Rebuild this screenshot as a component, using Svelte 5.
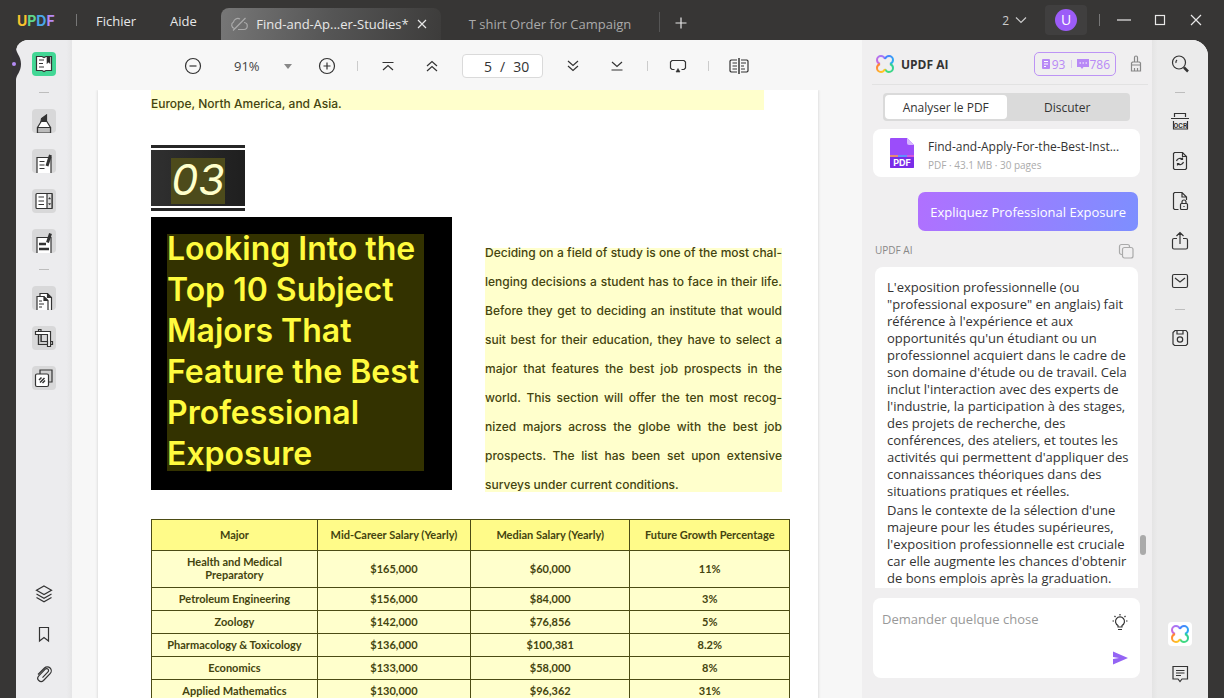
<script>
  let zoom = $state('91%');
  let currentPage = $state('5');
  let question = $state('');
  let activeTab = $state('analyse');

  const pageCount = 30;

  const icons = {
    reader: '<path d="M4.500 4.500h5.500l2 1 2-1h5.500v14H14l-2 1-2-1H4.500z" fill="#fff"/><path d="M7 8h5M7 11.500h4M7 15h5"/><path d="M15 4.500v7l1.500-1.500 1.500 1.500v-7z" fill="#2b2b2b" stroke-width=".6"/>',
    highlight: '<path d="M5.500 24v-5.500l4-6.500h5l4 6.500V24" fill="#fff"/><path d="M5.500 24v-5.500h13V24z" fill="#bbb"/><path d="M9 12.500 9.500 9.500l5-3.500v6.500z" fill="#333"/>',
    edit: '<path d="M5 24V8.500h14V24" fill="#fff"/><path d="M7.500 12.500h5M7.500 16h5M7.500 19.500h5"/><path d="m18.500 6-3.500 11" stroke-width="3"/>',
    form: '<rect x="4" y="4.500" width="16" height="15" rx="1" fill="#fff"/><path d="M15 4.500h5v15h-5z" fill="#ddd"/><path d="M6.500 8h5.500M6.500 12h5.500M6.500 15.500h5.500"/><path d="m16.600 10 1-1.500 1 1.500zM16.600 14.500l1 1.500 1-1.500z" fill="#333" stroke-width=".5"/>',
    sign: '<path d="M5 24V8.500h14V24" fill="#fff"/><path d="M7 15h7M7 20h10" stroke-width="2.500"/><path d="m18.500 4.500-3 9" stroke-width="3"/>',
    pages: '<path d="M8 22V7.500h7.500l4 4V24" fill="#fff"/><path d="M5 24V10.500h7l4 4V24" fill="#fff"/><path d="M12 10.500v4h4M15.500 7.500v4h4" fill="#333"/><path d="M7 15h3M7 18h5M7 21h3"/>',
    crop: '<path d="M6.500 3.500v15h14v-3H9v-12z" fill="#ccc"/><path d="M3.500 5.500v3h12v12h3v-15z" fill="#fff"/><path d="M6.500 8.500v10h9v-3H9v-7z" fill="#ccc"/>',
    layersBox: '<path d="M8 4h12v12H8z" fill="#d0d0d0"/><rect x="3.500" y="8" width="13" height="12.500" rx="1.500" fill="#fff"/><path d="m7 14 2.500-2.500M8 16.500l4.500-4.500M10.500 17l2.500-2.500" stroke-width="1.500"/>',
    layers: '<path d="m12 4 7.500 4.200L12 12.500 4.500 8.200z"/><path d="m4.500 12 7.500 4.200 7.500-4.200M4.500 15.500 12 19.800l7.500-4.300"/>',
    bookmark: '<path d="M7.500 5.500h9v13.500L12 15.500 7.500 19z"/>',
    clip: '<path d="m6 12.500 6.500-6.500a3.900 3.900 0 0 1 5.600 5.600l-6.600 6.900a3.300 3.300 0 0 1-4.700-4.700l6.500-6.600a1.900 1.900 0 0 1 2.700 2.700l-5.500 5.700"/>',
    search: '<circle cx="11" cy="10.500" r="6.500"/><path d="M8 11a3 3 0 0 1 1-3" /><path d="m16 15.500 4 4" stroke-width="2.500"/>',
    ocr: '<path d="M6.500 8V4.500h11V8M3 9.500h18M5.500 12v8h14v-8"/>',
    convert: '<path d="M6.500 3.500h8l4 4v12l-1 1h-11l-1-1v-15z"/><path d="M14.500 3.500v4h4M8.500 12a3.700 3.700 0 0 1 6-1.700M15.500 13a3.700 3.700 0 0 1-6 1.700M14.500 8.500v2h-2M9.500 16.500v-2h2"/>',
    protect: '<path d="M10.500 20.500h-4l-1-1v-15l1-1H14l4.500 4.500v3M14 3.500V8h4.500"/><rect x="12.500" y="14.500" width="7" height="6" rx="1"/><path d="M14 14.500V13a2 2 0 0 1 4 0v1.500M16 17v1"/>',
    share: '<path d="M9 9.500H6a1.500 1.500 0 0 0-1.500 1.500v7.500A1.500 1.500 0 0 0 6 20h12a1.500 1.500 0 0 0 1.500-1.500V11A1.500 1.500 0 0 0 18 9.500h-3M12 15V3.500M8.500 7 12 3.500 15.500 7"/>',
    mail: '<rect x="4.500" y="5.500" width="15" height="13" rx="1.500"/><path d="m7 9 5 4 5-4"/>',
    save: '<path d="M5 6.500 7 4.500h11l1.500 2v11.500l-1.500 1.500H6.500L5 18z"/><path d="M9 4.500V8h6V4.500"/><circle cx="12" cy="13.500" r="2.700"/>',
    comment: '<path d="M5 4.500h14.500v12.500H14L12 19.500 10 17H5z"/><path d="M8 8.500h8.500M8 11h8.500M8 13.500h5"/>',
    minus: '<circle cx="12" cy="12" r="7.500"/><path d="M8.500 12h7"/>',
    plus: '<circle cx="12" cy="12" r="7.500"/><path d="M8.500 12h7M12 8.500v7"/>',
    first: '<path d="M6.500 8.500h11M7 16l5-4.500 5 4.500"/>',
    prev: '<path d="m7 12 5-4.500 5 4.500M7 17l5-4.500L17 17"/>',
    next: '<path d="m7 7 5 4.500L17 7M7 12l5 4.500 5-4.500"/>',
    last: '<path d="m7 8 5 4.500L17 8M6.500 16h11"/>',
    present: '<path d="M8.500 15.500H6L4.500 14V8L6 6.500h12L19.500 8v6L18 15.500h-2.500"/><path d="m12 14.500 2 3.500h-4z" fill="#333" stroke-width=".6"/>',
    compare: '<path d="M12 4v16" stroke-width="1.500"/><path d="M10 6H4L3 7v10l1 1h6M14 6h6l1 1v10l-1 1h-6M5.500 9H10M5.500 12H10M5.500 15H10M14 9h5M14 12h3M14 15h4"/>',
    broom: '<path d="M10.500 10V5.500a1.500 1.500 0 0 1 3 0V10M7.500 13v-2l1-1h7l1 1v2zM7.500 13v6h9v-6M10.500 19v-3M13.500 19v-3"/>',
    bulb: '<path d="M10 17v-1.500a4.500 4.500 0 1 1 4 0V17zM10 19.500h4M12 4v1.500M6.500 6l1 1M17.500 6l-1 1M4.500 11H6M18 11h1.500"/>',
    copy: '<rect x="8.500" y="8.500" width="10.500" height="10.500" rx="2"/><path d="M8.500 15.500H7.500a2 2 0 0 1-2-2v-6a2 2 0 0 1 2-2h6a2 2 0 0 1 2 2v1"/>',
    close: '<path d="m7 7 10 10M17 7 7 17"/>',
    closeSmall: '<path d="m8 8 8 8M16 8l-8 8"/>',
    add: '<path d="M12 6.500v11M6.500 12h11"/>',
    chevron: '<path d="m7 9.500 5 5 5-5"/>',
    minimise: '<path d="M5 12h14"/>',
    maximise: '<rect x="7.500" y="7.500" width="9" height="9"/>',
    unsaved: '<path d="M7.500 16.500a3.500 3.500 0 0 1-1-6.500C7 7.500 10 5.500 13 7M17 10.500a3.500 3.500 0 0 1-.500 7H11M6 18.500 18.500 6"/>'
  };

  const leftTools = [
    { icon: 'highlight', label: 'Commenter' },
    { icon: 'edit', label: 'Modifier' },
    { icon: 'form', label: 'Formulaire' },
    { icon: 'sign', label: 'Signer' }
  ];
  const pageTools = [
    { icon: 'pages', label: 'Organiser' },
    { icon: 'crop', label: 'Rogner' },
    { icon: 'layersBox', label: 'Filigrane' }
  ];
  const navTools = [
    { icon: 'layers', label: 'Calques' },
    { icon: 'bookmark', label: 'Signets' },
    { icon: 'clip', label: 'Pièces jointes' }
  ];
  const shareTools = [
    { icon: 'convert', label: 'Convertir' },
    { icon: 'protect', label: 'Protéger' },
    { icon: 'share', label: 'Partager' },
    { icon: 'mail', label: 'Envoyer' }
  ];

  const headingLines = [
    'Looking Into the',
    'Top 10 Subject',
    'Majors That',
    'Feature the Best',
    'Professional',
    'Exposure'
  ];

  const introLines = [
    'Deciding on a field of study is one of the most chal-',
    'lenging decisions a student has to face in their life.',
    'Before they get to deciding an institute that would',
    'suit best for their education, they have to select a',
    'major that features the best job prospects in the',
    'world. This section will offer the ten most recog-',
    'nized majors across the globe with the best job',
    'prospects. The list has been set upon extensive',
    'surveys under current conditions.'
  ];

  const columns = [
    'Major',
    'Mid-Career Salary (Yearly)',
    'Median Salary (Yearly)',
    'Future Growth Percentage'
  ];
  const majors = [
    ['Health and Medical Preparatory', '$165,000', '$60,000', '11%'],
    ['Petroleum Engineering', '$156,000', '$84,000', '3%'],
    ['Zoology', '$142,000', '$76,856', '5%'],
    ['Pharmacology & Toxicology', '$136,000', '$100,381', '8.2%'],
    ['Economics', '$133,000', '$58,000', '8%'],
    ['Applied Mathematics', '$130,000', '$96,362', '31%']
  ];
</script>

{#snippet icon(name)}
  <svg class="icon" viewBox="0 0 24 24" aria-hidden="true">{@html icons[name]}</svg>
{/snippet}

{#snippet tool(item, tile)}
  <button class="tool" class:tile aria-label={item.label}>{@render icon(item.icon)}</button>
{/snippet}

{#snippet clover()}
  <svg class="clover" viewBox="0 0 20 20" aria-hidden="true">
    <defs>
      <linearGradient id="c1" x1="0" y1="1" x2="1" y2="0"><stop offset="0" stop-color="#d068d8" /><stop offset="1" stop-color="#9b7bff" /></linearGradient>
      <linearGradient id="c2" x1="0" y1="0" x2="1" y2="1"><stop offset="0" stop-color="#4a7dff" /><stop offset="1" stop-color="#28b4f0" /></linearGradient>
      <linearGradient id="c3" x1="1" y1="0" x2="0" y2="1"><stop offset="0" stop-color="#2fcf9b" /><stop offset="1" stop-color="#45dc78" /></linearGradient>
      <linearGradient id="c4" x1="0" y1="0" x2="1" y2="1"><stop offset="0" stop-color="#ff7a3c" /><stop offset="1" stop-color="#ffd21f" /></linearGradient>
    </defs>
    <path d="M10 5C9 2.500 7.500 2 6 2A4 4 0 0 0 2 6C2 7.500 2.500 9 5 10" stroke="url(#c1)" />
    <path d="M10 5C11 2.500 12.500 2 14 2A4 4 0 0 1 18 6C18 7.500 17.500 9 15 10" stroke="url(#c2)" />
    <path d="M15 10C17.500 11 18 12.500 18 14A4 4 0 0 1 14 18C12.500 18 11 17.500 10 15" stroke="url(#c3)" />
    <path d="M5 10C2.500 11 2 12.500 2 14A4 4 0 0 0 6 18C7.500 18 9 17.500 10 15" stroke="url(#c4)" />
  </svg>
{/snippet}

<div class="app">
  <header class="titlebar">
    <div class="logo"><span class="u">U</span><span class="p">P</span><span class="d">D</span><span class="f">F</span></div>
    <span class="bar-sep"></span>
    <nav class="menu">
      <button>Fichier</button>
      <button>Aide</button>
    </nav>
    <div class="tabs">
      <div class="tab active">
        {@render icon('unsaved')}
        <button class="tab-name">Find-and-Ap...er-Studies*</button>
        <button class="tab-close" aria-label="Fermer l'onglet">{@render icon('closeSmall')}</button>
      </div>
      <button class="tab second">T shirt Order for Campaign</button>
      <span class="tab-sep"></span>
      <button class="add" aria-label="Nouvel onglet">{@render icon('add')}</button>
    </div>
    <div class="window-actions">
      <button class="count">2 {@render icon('chevron')}</button>
      <button class="user" aria-label="Compte"><span class="avatar">U</span></button>
      <span class="bar-sep"></span>
      <button class="win" aria-label="Réduire">{@render icon('minimise')}</button>
      <button class="win" aria-label="Agrandir">{@render icon('maximise')}</button>
      <button class="win" aria-label="Fermer">{@render icon('close')}</button>
    </div>
  </header>

  <div class="workspace">
    <aside class="rail left">
      <svg class="notch" viewBox="0 0 12 32" aria-hidden="true">
        <path d="M0 0h4c0 5 5 8 5 16s-5 11-5 16H0z" fill="#363437" />
        <circle cx="2" cy="16" r="2" fill="#b58cf5" />
      </svg>
      <button class="tool tile reader" aria-label="Lecteur">{@render icon('reader')}</button>
      <span class="rail-sep"></span>
      {#each leftTools as item}{@render tool(item, true)}{/each}
      <span class="rail-sep"></span>
      {#each pageTools as item}{@render tool(item, true)}{/each}
      <div class="rail-end">
        {#each navTools as item}{@render tool(item, false)}{/each}
      </div>
    </aside>

    <main class="viewer">
      <div class="toolbar">
        <button class="tool" aria-label="Zoom arrière">{@render icon('minus')}</button>
        <label class="zoom">
          <select bind:value={zoom} aria-label="Zoom">
            <option>50%</option>
            <option>91%</option>
            <option>100%</option>
          </select>
          <span class="caret"></span>
        </label>
        <button class="tool" aria-label="Zoom avant">{@render icon('plus')}</button>
        <span class="v-sep"></span>
        <div class="pair">
          <button class="tool" aria-label="Première page">{@render icon('first')}</button>
          <button class="tool" aria-label="Page précédente">{@render icon('prev')}</button>
        </div>
        <label class="page-box">
          <input bind:value={currentPage} aria-label="Page" />
          <span>/</span>
          <span>{pageCount}</span>
        </label>
        <div class="pair">
          <button class="tool" aria-label="Page suivante">{@render icon('next')}</button>
          <button class="tool" aria-label="Dernière page">{@render icon('last')}</button>
        </div>
        <span class="v-sep"></span>
        <button class="tool" aria-label="Diaporama">{@render icon('present')}</button>
        <span class="v-sep"></span>
        <button class="tool" aria-label="Comparer">{@render icon('compare')}</button>
      </div>

      <div class="canvas">
        <article class="page">
          <p class="tail">Europe, North America, and Asia.</p>
          <div class="chapter"><div class="chapter-box"><span>03</span></div></div>
          <section class="intro">
            <div class="cover">
              <h1>
                {#each headingLines as line}<span>{line}</span>{/each}
              </h1>
            </div>
            <p class="body-text">
              {#each introLines as line}<span>{line}</span>{/each}
            </p>
          </section>
          <table>
            <colgroup>
              <col class="major" />
              <col class="mid" />
              <col />
              <col />
            </colgroup>
            <thead>
              <tr>
                {#each columns as column}<th>{column}</th>{/each}
              </tr>
            </thead>
            <tbody>
              {#each majors as row}
                <tr>
                  {#each row as cell}<td><span>{cell}</span></td>{/each}
                </tr>
              {/each}
            </tbody>
          </table>
        </article>
      </div>
    </main>

    <section class="ai">
      <header class="ai-head">
        {@render clover()}
        <h2>UPDF AI</h2>
        <div class="credits">
          <svg class="mini" viewBox="0 0 12 12" aria-hidden="true"><rect x="2" y="1" width="8" height="10" rx="1" fill="#b889f6" /><path d="M4 3.500h4M4 6h4M4 8.500h2" stroke="#fff" fill="none" /></svg>
          <span>93</span>
          <i></i>
          <svg class="mini" viewBox="0 0 12 12" aria-hidden="true"><path d="M0 1h12v8H6.500L5 11 3.500 9H0z" fill="#b889f6" /><path d="M2.500 5h1.500M5.500 5H7M8.500 5H10" stroke="#fff" fill="none" /></svg>
          <span>786</span>
        </div>
        <button class="broom" aria-label="Effacer">{@render icon('broom')}</button>
      </header>

      <div class="switch">
        <button class:on={activeTab === 'analyse'} onclick={() => (activeTab = 'analyse')}>Analyser le PDF</button>
        <button class:on={activeTab === 'chat'} onclick={() => (activeTab = 'chat')}>Discuter</button>
      </div>

      <div class="file">
        <svg class="file-icon" viewBox="0 0 26 32" aria-hidden="true">
          <path d="M2 1h16l7 7v22a1 1 0 0 1-1 1H2a1 1 0 0 1-1-1V2a1 1 0 0 1 1-1z" fill="#9b4dfa" />
          <path d="M18 1v5a2 2 0 0 0 2 2h5z" fill="#d7b8ff" />
          <path d="M1 20h24v10a1 1 0 0 1-1 1H2a1 1 0 0 1-1-1z" fill="#7a2ce8" />
          <path d="M1 19h8" stroke="#ff9e4a" stroke-width="1.500" />
          <path d="M9 19h9" stroke="#4ea6ff" stroke-width="1.500" />
          <path d="M18 19h7" stroke="#e85bd0" stroke-width="1.500" />
          <text x="13" y="28.500" text-anchor="middle">PDF</text>
        </svg>
        <div class="file-text">
          <strong>Find-and-Apply-For-the-Best-Inst...</strong>
          <small>PDF · 43.1 MB · 30 pages</small>
        </div>
      </div>

      <div class="chat">
        <div class="bubble">Expliquez Professional Exposure</div>
        <div class="sender">
          <span>UPDF AI</span>
          <button aria-label="Copier">{@render icon('copy')}</button>
        </div>
        <div class="answer">
          <p>L'exposition professionnelle (ou "professional exposure" en anglais) fait référence à l'expérience et aux opportunités qu'un étudiant ou un professionnel acquiert dans le cadre de son domaine d'étude ou de travail. Cela inclut l'interaction avec des experts de l'industrie, la participation à des stages, des projets de recherche, des conférences, des ateliers, et toutes les activités qui permettent d'appliquer des connaissances théoriques dans des situations pratiques et réelles.</p>
          <p>Dans le contexte de la sélection d'une majeure pour les études supérieures, l'exposition professionnelle est cruciale car elle augmente les chances d'obtenir de bons emplois après la graduation.</p>
        </div>
        <span class="thumb"></span>
      </div>

      <div class="ask">
        <textarea bind:value={question} placeholder="Demander quelque chose" aria-label="Question"></textarea>
        <div class="ask-actions">
          <button class="tool" aria-label="Suggestions">{@render icon('bulb')}</button>
          <button class="tool" aria-label="Envoyer la question">
            <svg class="send" viewBox="0 0 24 24" aria-hidden="true">
              <path d="M5 5.500 20 12 5 18.500V13l6-1-6-1z" fill="#9464f4" stroke="none" />
            </svg>
          </button>
        </div>
      </div>
    </section>

    <aside class="rail right">
      <button class="tool" aria-label="Rechercher">{@render icon('search')}</button>
      <span class="rail-sep"></span>
      <button class="tool" aria-label="OCR">
        <svg class="icon ocr" viewBox="0 0 24 24" aria-hidden="true">
          {@html icons.ocr}
          <text x="12.500" y="18.500" text-anchor="middle">OCR</text>
        </svg>
      </button>
      {#each shareTools as item}{@render tool(item, false)}{/each}
      <span class="rail-sep"></span>
      <button class="tool" aria-label="Enregistrer">{@render icon('save')}</button>
      <div class="rail-end">
        <button class="tool ai-toggle" aria-label="UPDF AI">{@render clover()}</button>
        <button class="tool" aria-label="Commentaires">{@render icon('comment')}</button>
      </div>
    </aside>
  </div>
</div>

<style>
  :global(body) {
    background: #373635;
    overflow: hidden;
  }

  .app {
    display: flex;
    flex-direction: column;
    height: 100vh;
    font-family: "Open Sans", "Noto Sans", sans-serif;
    font-size: 12px;
    line-height: 17px;
    color: #333;
  }

  * {
    box-sizing: border-box;
  }

  button {
    display: flex;
    align-items: center;
    justify-content: center;
    padding: 0;
    border: 0;
    background: none;
    font: inherit;
    color: inherit;
  }

  h1, h2, p {
    margin: 0;
  }

  .icon {
    display: block;
    flex: none;
    width: 24px;
    height: 24px;
    fill: none;
    stroke: currentColor;
    stroke-width: 1.2;
  }

  /* title bar */
  .titlebar {
    display: flex;
    align-items: center;
    flex: none;
    height: 40px;
    padding-left: 17px;
    color: #e8e8e8;
  }

  .logo {
    width: 40px;
    font-family: Inter, sans-serif;
    font-size: 14px;
    font-weight: 700;
    white-space: nowrap;
  }
  .u { color: #f7c32e; }
  .p { color: #5fd68b; }
  .d { color: #4aa8e8; }
  .f { color: #b78af5; }

  .bar-sep {
    width: 1px;
    height: 12px;
    margin-left: 19px;
    background: #777;
  }

  .menu {
    display: flex;
    gap: 34px;
    width: 125px;
    margin-left: 19px;
    padding-top: 2px;
    font-size: 13px;
  }

  .tabs {
    display: flex;
    align-items: center;
    align-self: flex-end;
    height: 32px;
    font-size: 13px;
  }

  .tab.active {
    display: flex;
    align-items: center;
    width: 220px;
    height: 32px;
    padding: 0 7px 0 6px;
    border-radius: 8px 8px 0 0;
    background: linear-gradient(100deg, #777, #555 50%, #3d3c3b);
  }
  .tab.active > .icon {
    color: #aaa;
  }
  .tab-name {
    flex: 1;
    padding-left: 4px;
    white-space: nowrap;
  }
  .tab.second {
    width: 218px;
    color: #aaa;
  }
  .tab-sep {
    width: 1px;
    height: 20px;
    margin-bottom: 4px;
    background: #555;
  }
  .add {
    margin: 0 0 2px 9px;
  }

  .window-actions {
    display: flex;
    align-items: center;
    margin-left: auto;
    padding-right: 16px;
  }
  .window-actions .bar-sep {
    margin-left: 12px;
  }
  .count {
    margin-right: 12px;
    color: #ccc;
  }
  .user {
    width: 42px;
    height: 30px;
    border-radius: 4px;
    background: #403f3f;
  }
  .avatar {
    width: 22px;
    height: 22px;
    border-radius: 50%;
    background: #9c5cf8;
    color: #fff;
    font-size: 14px;
    line-height: 22px;
  }
  .win {
    margin-left: 12px;
  }

  /* rails */
  .workspace {
    display: flex;
    flex: 1;
    min-height: 0;
    margin: 0 16px;
    border-radius: 12px 16px 0 0;
    background: #f7f7f7;
  }

  .rail {
    display: flex;
    flex-direction: column;
    align-items: center;
    flex: none;
    gap: 16px;
    width: 56px;
    padding: 12px 0;
  }
  .left {
    position: relative;
    border-radius: 12px 0 0 0;
    background: linear-gradient(90deg, #ececee 90%, #e5e5e6);
  }
  .right {
    border-radius: 0 16px 0 0;
    background: linear-gradient(90deg, #e4e4e4, #ebebeb 10%);
  }
  .notch {
    position: absolute;
    top: 8px;
    left: -4px;
    width: 12px;
    height: 32px;
  }
  .rail-sep {
    width: 10px;
    height: 1px;
    background: #bdbdbd;
  }
  .rail-end {
    display: flex;
    flex-direction: column;
    gap: 16px;
    margin-top: auto;
  }

  .tool {
    flex: none;
    width: 24px;
    height: 24px;
    border-radius: 4px;
  }
  .tile {
    background: #d8d8d9;
    overflow: hidden;
  }
  .reader {
    background: #42d795;
  }
  .ai-toggle {
    background: #fff;
  }
  .ocr text {
    fill: #333;
    stroke: none;
    font-family: Roboto, sans-serif;
    font-size: 7px;
    font-weight: 700;
  }

  /* document */
  .viewer {
    display: flex;
    flex-direction: column;
    flex: 1;
    min-width: 0;
  }

  .toolbar {
    display: flex;
    align-items: center;
    justify-content: center;
    flex: none;
    gap: 18px;
    height: 50px;
    padding: 2px 2px 0 0;
  }
  .v-sep {
    width: 1px;
    height: 10px;
    background: #ccc;
  }
  .pair {
    display: flex;
    gap: 20px;
  }

  .zoom {
    display: flex;
    align-items: center;
    width: 74px;
    padding: 0 5px 0 11px;
    font-size: 13px;
  }
  .zoom select {
    flex: 1;
    min-width: 0;
    padding: 0;
    border: 0;
    appearance: none;
    background: none;
    font: inherit;
    color: #444;
  }
  .caret {
    border: 4px solid transparent;
    border-top: 5px solid #888;
    border-bottom: 0;
  }

  .page-box {
    display: flex;
    align-items: center;
    gap: 8px;
    width: 81px;
    height: 24px;
    border: 1px solid #dadada;
    border-radius: 4px;
    background: #fff;
    font-size: 14px;
  }
  .page-box input {
    width: 29px;
    padding: 0;
    border: 0;
    background: none;
    font: inherit;
    color: inherit;
    text-align: right;
  }

  .canvas {
    flex: 1;
    min-height: 0;
    padding: 0 44px 0 26px;
    overflow: hidden;
  }

  .page {
    padding: 0 28px 0 53px;
    background: #fff;
    box-shadow: 0 0 3px #ccc;
    font-family: Inter, sans-serif;
    color: #44440f;
  }

  .tail {
    width: 96%;
    height: 20px;
    padding-top: 7px;
    background: #ffffcc;
    font-size: 12px;
    font-weight: 500;
    line-height: 14px;
  }

  .chapter {
    width: 94px;
    margin-top: 35px;
    padding: 2px 0;
    border: solid #262626;
    border-width: 3px 0;
  }
  .chapter-box {
    display: flex;
    align-items: flex-end;
    justify-content: center;
    height: 56px;
    padding-bottom: 2px;
    background: linear-gradient(90deg, #303030, #1f1f1f);
  }
  .chapter-box span {
    height: 46px;
    background: #4d4b1b;
    color: #ffffcc;
    font-size: 43px;
    font-style: italic;
    line-height: 42px;
  }

  .intro {
    display: grid;
    grid-template-columns: 301fr 297fr;
    gap: 33px;
    align-items: start;
    margin-top: 6px;
    padding-right: 8px;
  }
  .cover {
    padding: 11px 28px 19px 16px;
    background: #000;
  }
  h1 {
    height: 243px;
    background: linear-gradient(#333200, #333200) 0 6px / 100% 237px no-repeat;
    color: #fffb3e;
    font-size: 32px;
    font-weight: 600;
    line-height: 41px;
  }
  h1 span {
    display: block;
    white-space: nowrap;
  }
  .body-text {
    margin-top: 21px;
    background: linear-gradient(#ffffcc, #ffffcc) 0 10px / 100% 244px no-repeat;
    font-size: 12px;
    font-weight: 500;
    line-height: 29px;
  }
  .body-text span {
    display: block;
    white-space: nowrap;
    text-align-last: justify;
  }
  .body-text span:last-child {
    text-align-last: left;
  }

  table {
    width: 100%;
    margin-top: 20px;
    border-collapse: collapse;
    table-layout: fixed;
    background: #ffffcc;
    font-family: Lato, sans-serif;
    font-size: 11px;
    font-weight: 700;
    line-height: 13px;
    text-align: center;
  }
  .major {
    width: 26%;
  }
  .mid {
    width: 24%;
  }
  th, td {
    height: 23px;
    padding: 0 0 2px;
    border: 1px solid #4c4c14;
  }
  th {
    height: 31px;
    background: #fffb89;
    white-space: nowrap;
  }
  tbody tr:first-child td {
    height: 37px;
  }
  tbody tr:first-child span {
    display: inline-block;
    max-width: 120px;
  }

  /* assistant */
  .ai {
    display: flex;
    flex-direction: column;
    flex: none;
    width: 290px;
    background: #f0eff0;
  }

  .ai-head {
    display: flex;
    align-items: center;
    flex: none;
    height: 45px;
    margin: 0 4px 0 10px;
    padding-top: 4px;
    padding-left: 3px;
    border-bottom: 1px solid #e2e2e2;
  }
  .clover {
    width: 20px;
    height: 20px;
    fill: none;
    stroke-width: 2;
  }
  h2 {
    margin-left: 6px;
    font-size: 12px;
    font-weight: 700;
  }
  .credits {
    display: flex;
    align-items: center;
    height: 24px;
    margin-left: auto;
    padding: 0 5px;
    border: 1px solid #bd94f5;
    border-radius: 5px;
    color: #b889f6;
  }
  .credits i {
    width: 1px;
    height: 8px;
    margin: 0 5px 0 6px;
    background: #d9c8f0;
  }
  .mini {
    width: 12px;
    height: 12px;
  }
  .broom {
    margin-left: 8px;
    color: #888;
  }

  .switch {
    display: flex;
    flex: none;
    height: 28px;
    margin: 8px 22px 0 21px;
    padding: 2px;
    border-radius: 4px;
    background: #dadada;
  }
  .switch button {
    flex: 1;
    border-radius: 4px;
  }
  .switch .on {
    background: #fff;
  }

  .file {
    display: flex;
    align-items: center;
    flex: none;
    gap: 13px;
    height: 48px;
    margin: 8px 12px 0 11px;
    padding-left: 16px;
    border-radius: 8px;
    background: #fff;
  }
  .file-icon {
    width: 26px;
    height: 32px;
  }
  .file-icon text {
    fill: #fff;
    font-family: Inter, sans-serif;
    font-size: 9px;
    font-weight: 700;
  }
  .file-text {
    padding-top: 5px;
  }
  .file strong, .file small {
    display: block;
    font-weight: 400;
    line-height: 18px;
    white-space: nowrap;
  }
  .file small {
    font-size: 10px;
    color: #aaa;
  }

  .chat {
    position: relative;
    display: flex;
    flex-direction: column;
    flex: 1;
    min-height: 0;
    margin: 15px 14px 0 13px;
    font-size: 13px;
  }
  .bubble {
    align-self: flex-end;
    flex: none;
    padding: 12px 12px 10px;
    border-radius: 7px;
    background: linear-gradient(100deg, #b070ff, #7d8fff);
    color: #fff;
    line-height: 17px;
    white-space: nowrap;
  }
  .sender {
    display: flex;
    align-items: center;
    justify-content: space-between;
    flex: none;
    height: 36px;
    padding-top: 3px;
    font-size: 10px;
    color: #888;
  }
  .sender button {
    color: #aaa;
  }
  .answer {
    flex: 1;
    min-height: 0;
    padding: 12px 6px 0 12px;
    border-radius: 8px 8px 0 0;
    background: #fff;
    overflow: hidden;
  }
  .answer p + p {
    margin-top: 2px;
  }
  .thumb {
    position: absolute;
    right: -8px;
    bottom: 33px;
    width: 6px;
    height: 20px;
    border-radius: 3px;
    background: #aaa;
  }

  .ask {
    display: flex;
    flex: none;
    height: 80px;
    margin: 10px 12px 20px 11px;
    padding: 12px 8px 8px 9px;
    border-radius: 8px;
    background: #fff;
  }
  .ask textarea {
    flex: 1;
    min-width: 0;
    padding: 1px 0 0;
    border: 0;
    background: none;
    font: inherit;
    font-size: 13px;
    resize: none;
    outline: 0;
  }
  .ask textarea::placeholder {
    color: #999;
  }
  .ask-actions {
    display: flex;
    flex-direction: column;
    justify-content: space-between;
  }
</style>
